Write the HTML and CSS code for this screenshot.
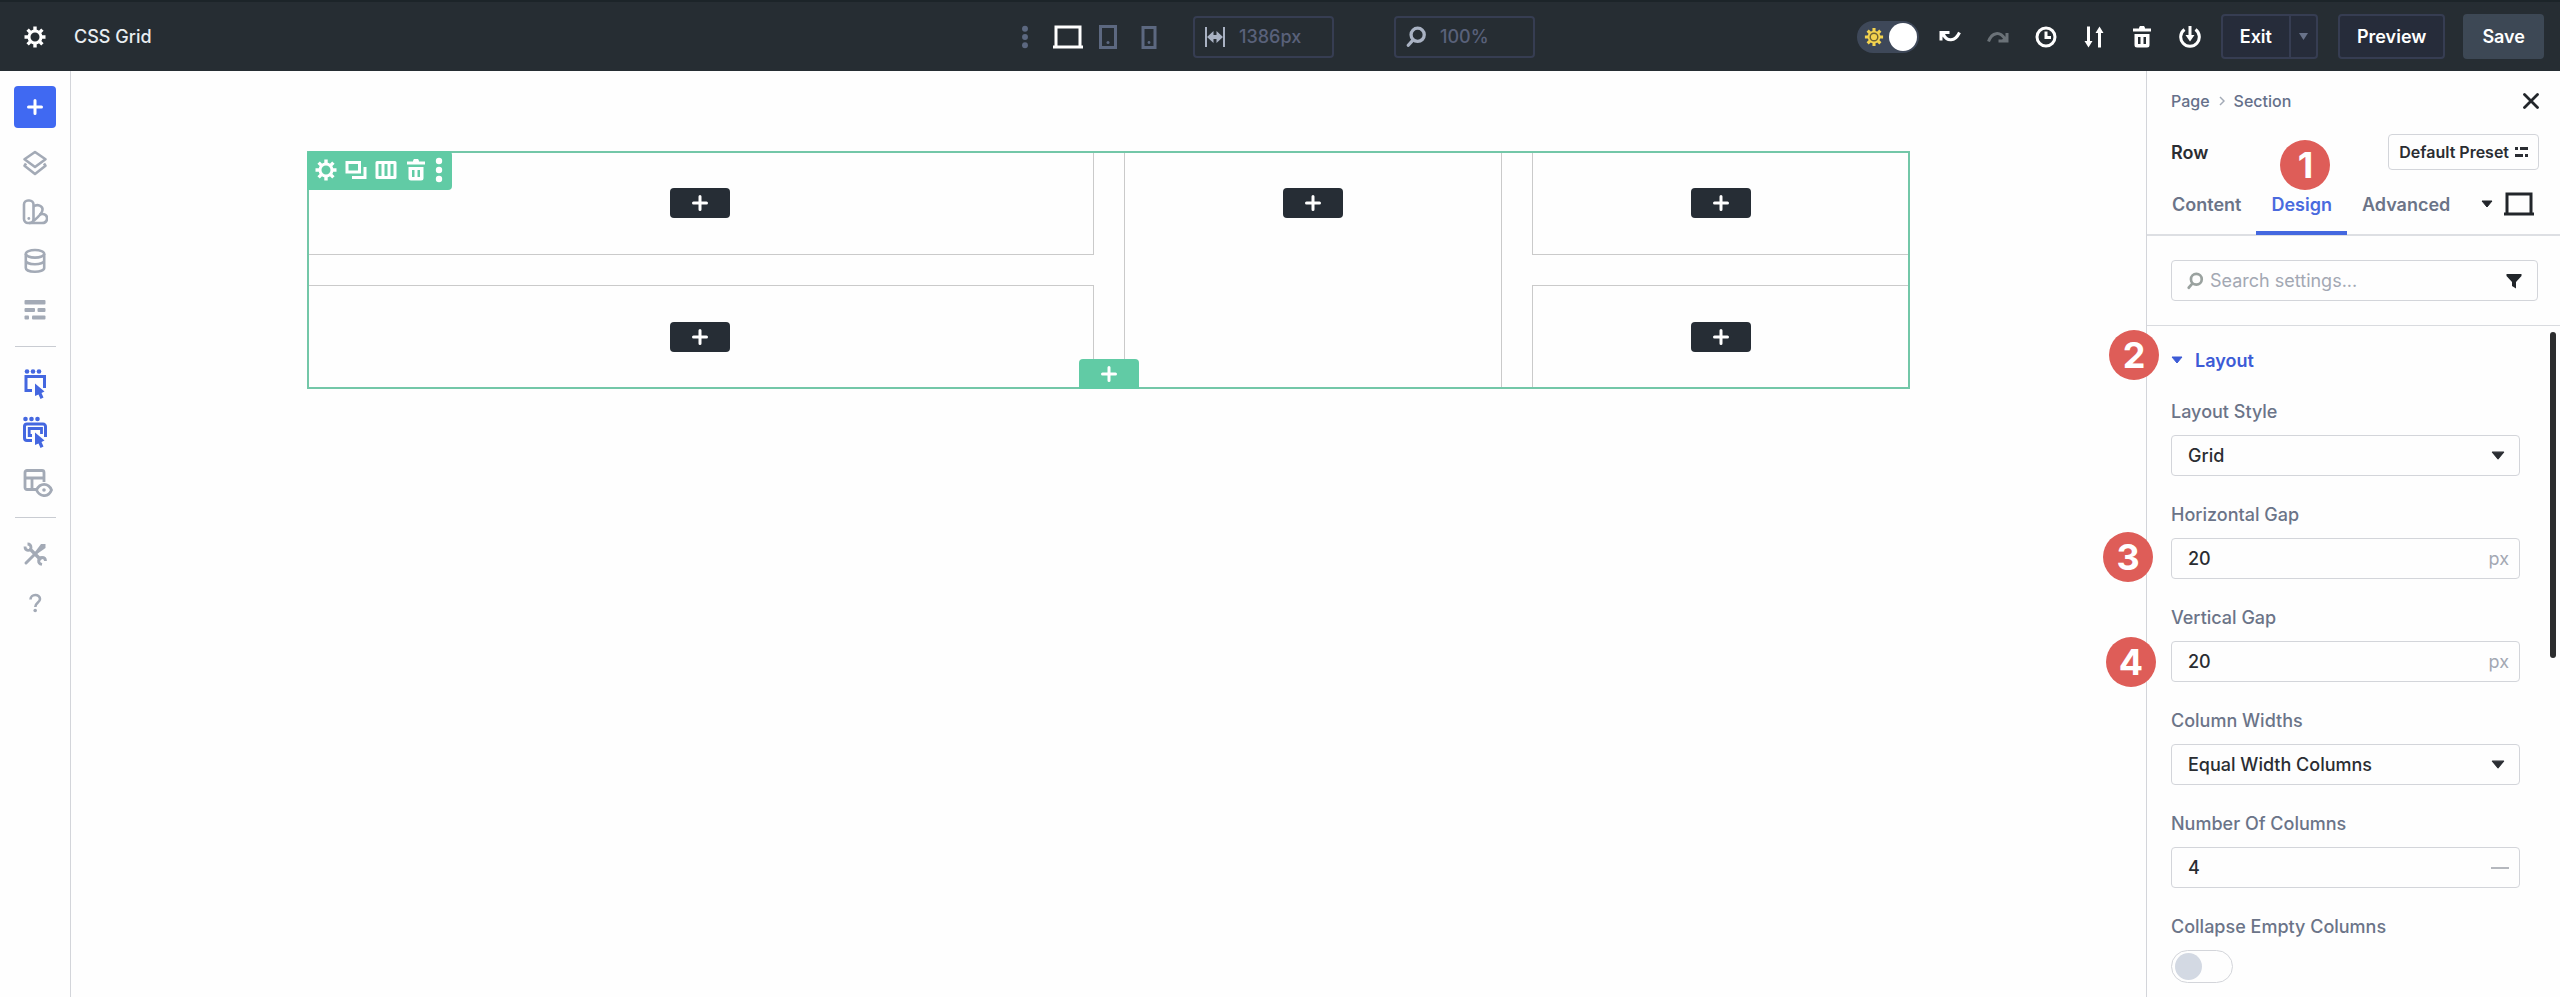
FILE: index.html
```html
<!DOCTYPE html>
<html lang="en">
<head>
  <meta charset="UTF-8" />
  <title>CSS Grid</title>
  <meta name="viewport" content="width=device-width, initial-scale=1.0" />
  <link rel="stylesheet" href="styles.css">
</head>
<body>
  <!-- shared icons -->
  <svg class="sprite" aria-hidden="true">
    <symbol id="gear" viewBox="0 0 22 22">
      <circle cx="11" cy="11" r="6" fill="none" stroke="currentColor" stroke-width="3" />
      <path d="M11 .5v4M11 17.5v4M.5 11h4M17.5 11h4M3.600 3.600l3 3M15.400 15.400l3 3M3.600 18.400l3-3M15.400 6.600l3-3" stroke="currentColor" stroke-width="3.400" />
    </symbol>
    <symbol id="plus" viewBox="0 0 16 16">
      <path d="M8 1.500v13M1.500 8h13" stroke="currentColor" stroke-width="3" stroke-linecap="round" />
    </symbol>
    <symbol id="trash" viewBox="0 0 18 22">
      <path d="M6 2.500a3 3 0 0 1 6 0h6v3H0v-3z" fill="currentColor" />
      <path d="M1.500 8h15v11a2.500 2.500 0 0 1-2.500 2.500H4A2.500 2.500 0 0 1 1.500 19zM5 11v7h2.500v-7zM10.500 11v7H13v-7z" fill="currentColor" fill-rule="evenodd" />
    </symbol>
    <symbol id="dots" viewBox="0 0 8 26">
      <circle cx="4" cy="4" r="3.200" fill="currentColor" /><circle cx="4" cy="13" r="3.200" fill="currentColor" /><circle cx="4" cy="22" r="3.200" fill="currentColor" />
    </symbol>
    <symbol id="laptop" viewBox="0 0 30 24">
      <path d="M3 21V2h24v19M0 22h30" fill="none" stroke="currentColor" stroke-width="3" />
    </symbol>
    <symbol id="search" viewBox="0 0 18 20">
      <circle cx="10.500" cy="8" r="6" fill="none" stroke="currentColor" stroke-width="3" />
      <path d="M6 13l-4 4.500" stroke="currentColor" stroke-width="3" stroke-linecap="round" />
    </symbol>
    <symbol id="caret" viewBox="0 0 12 8">
      <path d="M1 1h10L6 7z" fill="currentColor" stroke="currentColor" stroke-linejoin="round" />
    </symbol>
  </svg>

  <header class="topbar">
    <div class="topbar-left">
      <button class="icon-btn" aria-label="Settings"><svg width="22" height="22"><use href="#gear" /></svg></button>
      <span class="title">CSS Grid</span>
    </div>

    <div class="topbar-center">
      <div class="devices">
        <button class="icon-btn muted" aria-label="More"><svg width="8" height="24"><use href="#dots" /></svg></button>
        <button class="icon-btn" aria-label="Desktop"><svg width="30" height="24"><use href="#laptop" /></svg></button>
        <button class="icon-btn muted tablet" aria-label="Tablet">
          <svg width="18" height="24" viewBox="0 0 18 24"><path d="M1.500 1.500h15v21h-15z" fill="none" stroke="currentColor" stroke-width="3" /><circle cx="9" cy="17.500" r="1.500" fill="currentColor" /></svg>
        </button>
        <button class="icon-btn muted" aria-label="Phone">
          <svg width="16" height="24" viewBox="0 0 16 24"><path d="M2 2.500h12v20H2z" fill="none" stroke="currentColor" stroke-width="3" /><circle cx="8" cy="17.500" r="1.400" fill="currentColor" /></svg>
        </button>
      </div>
      <label class="size-box">
        <svg width="20" height="22" viewBox="0 0 20 22"><path d="M1 1v20M19 1v20" stroke="currentColor" stroke-width="2" /><path d="M2 11l6.500-6v4h3V5l6.500 6-6.500 6v-4h-3v4z" fill="currentColor" /></svg>
        <input type="text" value="1386px" aria-label="Viewport width">
      </label>
      <label class="size-box zoom-box">
        <svg width="20" height="22"><use href="#search" /></svg>
        <input type="text" value="100%" aria-label="Zoom">
      </label>
    </div>

    <div class="topbar-right">
      <label class="theme-switch">
        <input type="checkbox" checked aria-label="Light mode">
        <svg width="20" height="20" viewBox="0 0 22 22"><path d="M11 1v20M1 11h20M4 4l14 14M4 18L18 4" stroke="#f3d34f" stroke-width="3.400" /><circle cx="11" cy="11" r="7" fill="#f3d34f" /><circle cx="11" cy="11" r="4.200" fill="#f3d34f" stroke="#6d6234" stroke-width="1.600" /></svg>
      </label>
      <div class="actions">
        <button class="icon-btn" aria-label="Undo">
          <svg width="22" height="22" viewBox="0 0 22 22"><path d="M4 8c4 8 12 8 16.500-1.500" fill="none" stroke="currentColor" stroke-width="3" /><path d="M2 14.500V6.500h8.500" fill="none" stroke="currentColor" stroke-width="3" /><path d="M1 6h8l-8 7z" fill="currentColor" /></svg>
        </button>
        <button class="icon-btn dim" aria-label="Redo">
          <svg width="22" height="22" viewBox="0 0 22 22"><path d="M1.500 15.500C5 6 13 5 18 13" fill="none" stroke="currentColor" stroke-width="3" /><path d="M11.500 15h8.500V7" fill="none" stroke="currentColor" stroke-width="3" /><path d="M21 15.500h-8l8-7z" fill="currentColor" /></svg>
        </button>
        <button class="icon-btn" aria-label="History">
          <svg width="22" height="22" viewBox="0 0 22 22"><circle cx="11" cy="11" r="9" fill="none" stroke="currentColor" stroke-width="3" /><path d="M11 5.500V11.500h5" fill="none" stroke="currentColor" stroke-width="3" /></svg>
        </button>
        <button class="icon-btn" aria-label="Portability">
          <svg width="22" height="22" viewBox="0 0 22 22"><path d="M5.500 .5v17M16.500 4.500v17" stroke="currentColor" stroke-width="3" /><path d="M1.500 15h8l-4 6.500zM12.500 7h8l-4-6.500z" fill="currentColor" /></svg>
        </button>
        <button class="icon-btn" aria-label="Clear layout"><svg width="22" height="22"><use href="#trash" /></svg></button>
        <button class="icon-btn" aria-label="Save to library">
          <svg width="22" height="22" viewBox="0 0 22 22"><path d="M5.500 3.500a9.300 9.300 0 1 0 11 0" fill="none" stroke="currentColor" stroke-width="3" /><path d="M11 0v10" stroke="currentColor" stroke-width="3" /><path d="M6.500 9h9L11 15.500z" fill="currentColor" /></svg>
        </button>
      </div>
      <div class="split-btn">
        <button>Exit</button>
        <button class="split-caret" aria-label="Exit options"><svg width="9" height="7" viewBox="0 0 9 7"><path d="M0 0h9L4.500 7z" fill="currentColor" /></svg></button>
      </div>
      <button class="bar-btn">Preview</button>
      <button class="bar-btn save-btn">Save</button>
    </div>
  </header>

  <div class="workspace">
    <nav class="sidebar">
      <button class="add-btn" aria-label="Add"><svg width="16" height="16"><use href="#plus" /></svg></button>
      <button class="side-btn" aria-label="Layers">
        <svg width="26" height="26" viewBox="0 0 26 26"><path d="M13 2L2.500 9.200 13 17l10.500-7.800z" fill="none" stroke="currentColor" stroke-width="2.600" stroke-linejoin="round" /><path d="M4 13.500l-1.500 2.300L13 24l10.500-8.200L22 13.500" fill="none" stroke="currentColor" stroke-width="2.600" stroke-linejoin="round" /></svg>
      </button>
      <button class="side-btn" aria-label="Presets">
        <svg width="26" height="26" viewBox="0 0 26 26"><g fill="none" stroke="currentColor" stroke-width="2.600" stroke-linejoin="round"><rect x="2" y="1.500" width="9.500" height="22.500" rx="4" /><path d="M11.500 7.500c4-3 9.500-.5 9 3.500-.2 3-6 8.500-9 11" /><path d="M17.500 15.500c5-1.500 8 1 7.500 4.500-.3 3-2.500 4-5 4H7" /></g><circle cx="6.800" cy="19.500" r="1.400" fill="currentColor" /></svg>
      </button>
      <button class="side-btn" aria-label="Data">
        <svg width="26" height="26" viewBox="0 0 26 26"><g fill="none" stroke="currentColor" stroke-width="2.600"><ellipse cx="13" cy="5.800" rx="9.200" ry="3.800" /><path d="M3.800 6v14c0 5 18.400 5 18.400 0V6M3.800 12.500c0 5 18.400 5 18.400 0" /></g></svg>
      </button>
      <button class="side-btn" aria-label="Structure">
        <svg width="26" height="26" viewBox="0 0 26 26" fill="currentColor"><rect x="2.500" y="3" width="21" height="4.500" rx="1" /><rect x="2.500" y="11" width="10.500" height="4" rx="1" /><rect x="15.500" y="11" width="8" height="4" rx="1" /><rect x="2.500" y="18.500" width="4.500" height="4" rx="1" /><rect x="10" y="18.500" width="13.500" height="4" rx="1" /></svg>
      </button>
      <hr>
      <button class="side-btn active" aria-label="Select">
        <svg width="26" height="32" viewBox="0 0 26 32"><g fill="currentColor"><circle cx="5" cy="4.500" r="2.300" /><circle cx="11" cy="4.500" r="2.300" /><circle cx="17" cy="4.500" r="2.300" /><path d="M13 16.500l9.500 8-3 1.500 2 4.500-3 1.500-2-4.500-3.500 1.500z" /></g><path d="M10 23.500H4V9.500h18.500V21" fill="none" stroke="currentColor" stroke-width="3" /></svg>
      </button>
      <button class="side-btn active" aria-label="Select nested">
        <svg width="26" height="32" viewBox="0 0 26 32"><g fill="currentColor"><circle cx="3.500" cy="3" r="2.300" /><circle cx="9.500" cy="3" r="2.300" /><circle cx="15.500" cy="3" r="2.300" /><path d="M13 16.500l9.500 8-3 1.500 2 4.500-3 1.500-2-4.500-3.500 1.500z" /></g><g fill="none" stroke="currentColor"><path d="M10 24.500H5A2.500 2.500 0 0 1 2.500 22V10A2.500 2.500 0 0 1 5 8h16a2.500 2.500 0 0 1 2.500 2.500V21" stroke-width="3" /><path d="M10 19.500H7.200v-7h12.300V18" stroke-width="2.800" /></g></svg>
      </button>
      <button class="side-btn" aria-label="Layout view">
        <svg class="wide" width="32" height="32" viewBox="0 0 32 32"><g fill="none" stroke="currentColor" stroke-width="2.800"><path d="M15 24.500H6A2 2 0 0 1 4 22.500V7.500A2 2 0 0 1 6 5.500h15a2 2 0 0 1 2 2V17M4 13h19M11 13v11" /><path d="M15.500 25c3.500-7.500 12-7.500 15 0-3 7.500-11.500 7.500-15 0z" /></g><circle cx="23" cy="25" r="1.800" fill="currentColor" /></svg>
      </button>
      <hr>
      <button class="side-btn" aria-label="Tools">
        <svg width="26" height="26" viewBox="0 0 26 26"><path d="M4 22L14 12" stroke="currentColor" stroke-width="3" stroke-linecap="round" /><path d="M13 11l6-8h4.500v4l-8.500 6z" fill="currentColor" /><path d="M7.500 7.500L19 19" stroke="currentColor" stroke-width="3.400" /><path d="M3 5.500c0 5 6 5 6 1 0-2-1-3.500-3.500-3.500M20 23.500c-5-1-4-7 0-7 2.500 0 3.500 1.500 3.500 3.500" fill="none" stroke="currentColor" stroke-width="2.800" /></svg>
      </button>
      <button class="side-btn" aria-label="Help">
        <svg width="26" height="26" viewBox="0 0 26 26"><path d="M8.500 9.500c0-6 9.500-6 9.500-.5 0 3.500-4.700 3.500-4.700 8" fill="none" stroke="currentColor" stroke-width="2.600" /><circle cx="13.200" cy="20.500" r="1.800" fill="currentColor" /></svg>
      </button>
    </nav>

    <main class="canvas">
      <section class="row">
        <div class="cell cell-wide"><button class="module-btn" aria-label="Add module"><svg width="16" height="16"><use href="#plus" /></svg></button></div>
        <div class="cell cell-tall"><button class="module-btn" aria-label="Add module"><svg width="16" height="16"><use href="#plus" /></svg></button></div>
        <div class="cell"><button class="module-btn" aria-label="Add module"><svg width="16" height="16"><use href="#plus" /></svg></button></div>
        <div class="cell cell-wide"><button class="module-btn" aria-label="Add module"><svg width="16" height="16"><use href="#plus" /></svg></button></div>
        <div class="cell"><button class="module-btn" aria-label="Add module"><svg width="16" height="16"><use href="#plus" /></svg></button></div>

        <div class="row-tools">
          <button class="icon-btn" aria-label="Row settings"><svg width="22" height="22"><use href="#gear" /></svg></button>
          <button class="icon-btn" aria-label="Duplicate row">
            <svg width="22" height="22" viewBox="0 0 22 22"><path d="M2 3.500h12.500v9.500H2zM20 8v10.500H7" fill="none" stroke="currentColor" stroke-width="3" /></svg>
          </button>
          <button class="icon-btn" aria-label="Columns">
            <svg width="22" height="22" viewBox="0 0 22 22"><path d="M2 3.500h18v15H2zM8 3.500v15M14 3.500v15" fill="none" stroke="currentColor" stroke-width="3" stroke-linejoin="round" /></svg>
          </button>
          <button class="icon-btn" aria-label="Delete row"><svg width="22" height="22"><use href="#trash" /></svg></button>
          <button class="icon-btn" aria-label="More"><svg width="8" height="26"><use href="#dots" /></svg></button>
        </div>
        <button class="row-add" aria-label="Add row"><svg width="16" height="16"><use href="#plus" /></svg></button>
      </section>
    </main>

    <aside class="panel">
      <div class="panel-head">
        <div class="crumbs">
          <a href="#">Page</a>
          <svg width="6" height="10" viewBox="0 0 6 10"><path d="M1 1l4 4-4 4" fill="none" stroke="currentColor" stroke-width="1.500" /></svg>
          <a href="#">Section</a>
          <button class="icon-btn close" aria-label="Close"><svg width="16" height="16" viewBox="0 0 16 16"><path d="M1.500 1.500l13 13M14.500 1.500l-13 13" stroke="currentColor" stroke-width="2.800" stroke-linecap="round" /></svg></button>
        </div>
        <div class="panel-title">
          <h2>Row</h2>
          <button class="preset">Default Preset <svg width="13" height="12" viewBox="0 0 13 12" fill="currentColor"><path d="M0 1h3v3H0zM5 1h8v3H5zM0 8h8v3H0zM10 8h3v3h-3z" /></svg></button>
        </div>
        <div class="tabs">
          <button class="tab">Content</button>
          <button class="tab current">Design<span class="badge badge-top">1</span></button>
          <button class="tab">Advanced</button>
          <button class="device-pick" aria-label="Device">
            <svg width="12" height="8"><use href="#caret" /></svg>
            <svg width="30" height="24"><use href="#laptop" /></svg>
          </button>
        </div>
      </div>

      <div class="search">
        <label class="search-box">
          <svg width="18" height="18"><use href="#search" /></svg>
          <input type="text" placeholder="Search settings..." aria-label="Search settings">
          <svg class="filter" width="16" height="16" viewBox="0 0 16 16"><path d="M.5 1h15v2L10 9v6.500L6 13V9L.5 3z" fill="currentColor" /></svg>
        </label>
      </div>

      <div class="settings">
        <button class="group-title"><svg width="12" height="8"><use href="#caret" /></svg>Layout<span class="badge badge-group">2</span></button>

        <div class="field">
          <label for="layout-style">Layout Style</label>
          <div class="control">
            <select id="layout-style"><option>Grid</option></select>
            <svg class="arrow" width="14" height="9"><use href="#caret" /></svg>
          </div>
        </div>
        <div class="field">
          <label for="h-gap">Horizontal Gap</label>
          <div class="control">
            <input type="text" id="h-gap" value="20">
            <span class="unit">px</span>
            <span class="badge badge-h">3</span>
          </div>
        </div>
        <div class="field">
          <label for="v-gap">Vertical Gap</label>
          <div class="control">
            <input type="text" id="v-gap" value="20">
            <span class="unit">px</span>
            <span class="badge badge-v">4</span>
          </div>
        </div>
        <div class="field">
          <label for="col-widths">Column Widths</label>
          <div class="control">
            <select id="col-widths"><option>Equal Width Columns</option></select>
            <svg class="arrow" width="14" height="9"><use href="#caret" /></svg>
          </div>
        </div>
        <div class="field">
          <label for="col-count">Number Of Columns</label>
          <div class="control">
            <input type="text" id="col-count" value="4">
            <span class="unit dash"></span>
          </div>
        </div>
        <div class="field">
          <label for="collapse">Collapse Empty Columns</label>
          <input type="checkbox" class="switch" id="collapse">
        </div>
        <div class="scroll-thumb"></div>
      </div>
    </aside>
  </div>
</body>
</html>
```
FILE: styles.css
```css
* {
  box-sizing: border-box;
}

body {
  margin: 0;
  height: 100vh;
  display: flex;
  flex-direction: column;
  overflow: hidden;
  font-family: Inter, "Liberation Sans", sans-serif;
  font-size: 18px;
  font-weight: 500;
  color: #2a2d32;
  background-color: #fefefe;
}

button,
input,
select {
  font: inherit;
  color: inherit;
  margin: 0;
  padding: 0;
  border: none;
  background: none;
}

button {
  cursor: pointer;
}

svg {
  display: block;
  flex: none;
}

.sprite {
  position: absolute;
  width: 0;
  height: 0;
}

.icon-btn {
  display: flex;
  align-items: center;
  justify-content: center;
}

/* top bar */
.topbar {
  display: grid;
  grid-template-columns: 1fr auto 1fr;
  align-items: center;
  height: 71px;
  padding: 0 16px 0 12px;
  border-top: 2px solid #1c2429;
  background-color: #262d33;
  color: #fff;
}

.topbar-left {
  display: flex;
  align-items: center;
  gap: 28px;
  padding-left: 12px;
}

.title {
  color: #e9edf1;
}

.topbar-center {
  display: flex;
  align-items: center;
}

.devices {
  display: flex;
  align-items: center;
  gap: 24px;
  margin-right: 36px;
}

.tablet {
  margin-left: -8px;
}

.muted {
  color: #5c6880;
}

.dim {
  color: #6b7278;
}

.size-box {
  display: flex;
  align-items: center;
  gap: 14px;
  width: 141px;
  height: 42px;
  padding: 0 10px;
  border: 2px solid #363d52;
  border-radius: 4px;
  color: #a9b2c3;
}

.size-box input {
  width: 100%;
  min-width: 0;
  color: #59617a;
}

.zoom-box {
  margin-left: 60px;
}

.topbar-right {
  display: flex;
  align-items: center;
  justify-content: flex-end;
  gap: 20px;
}

.theme-switch {
  position: relative;
  display: flex;
  align-items: center;
}

.theme-switch input {
  appearance: none;
  display: flex;
  align-items: center;
  justify-content: flex-end;
  width: 62px;
  height: 32px;
  padding: 0 2px;
  border-radius: 16px;
  background-color: #3e4859;
}

.theme-switch input::before {
  content: "";
  width: 28px;
  height: 28px;
  border-radius: 50%;
  background-color: #fff;
}

.theme-switch svg {
  position: absolute;
  left: 7px;
}

.actions {
  display: flex;
  gap: 26px;
}

.split-btn {
  display: flex;
  height: 45px;
  border: 2px solid #363d52;
  border-radius: 4px;
  background-color: #262c3a;
  font-weight: 600;
}

.split-btn button {
  padding: 0 17px;
}

.split-btn .split-caret {
  padding: 0 8px;
  border-left: 2px solid #363d52;
  color: #69738a;
}

.bar-btn {
  height: 45px;
  padding: 0 17px;
  border: 2px solid #363d52;
  border-radius: 4px;
  background-color: #262c3a;
  font-weight: 600;
}

.save-btn {
  margin-left: -2px;
  border-color: #3d4855;
  background-color: #3d4855;
}

/* layout */
.workspace {
  flex: 1;
  display: flex;
  min-height: 0;
}

.sidebar {
  width: 71px;
  padding-top: 15px;
  border-right: 1px solid #d3d5da;
  display: flex;
  flex-direction: column;
  align-items: center;
}

.add-btn {
  display: flex;
  align-items: center;
  justify-content: center;
  width: 42px;
  height: 42px;
  margin-bottom: 10px;
  border-radius: 4px;
  background-color: #4069f2;
  color: #fff;
}

.side-btn {
  display: flex;
  align-items: center;
  justify-content: center;
  width: 42px;
  height: 49px;
  color: #a3aab6;
}

.side-btn .wide {
  margin-left: 4px;
}

.side-btn.active {
  color: #4467e0;
}

.sidebar hr {
  width: 41px;
  height: 1px;
  margin: 12px 0 11px;
  border: none;
  background-color: #c9ccd2;
}

.canvas {
  flex: 1;
  padding: 80px 236px;
}

.row {
  position: relative;
  display: grid;
  grid-template-columns: repeat(4, 1fr);
  grid-auto-rows: 104px;
  gap: 30px;
  outline: 2px solid #73c7a8;
  outline-offset: -2px;
}

.cell {
  border: 1px solid #cacaca;
  padding-top: 36px;
  display: flex;
  justify-content: center;
  align-items: flex-start;
}

.cell-wide {
  grid-column: span 2;
}

.cell-tall {
  grid-row: span 2;
}

.module-btn,
.row-add {
  display: flex;
  align-items: center;
  justify-content: center;
  width: 60px;
  height: 30px;
  border-radius: 4px;
  background-color: #262d35;
  color: #fff;
}

.row-add {
  position: absolute;
  left: 50%;
  bottom: 0;
  margin-left: -30px;
  border-radius: 4px 4px 0 0;
  background-color: #61cba5;
}

.row-tools {
  position: absolute;
  top: 0;
  left: 0;
  display: flex;
  align-items: center;
  gap: 8px;
  height: 39px;
  padding: 0 9px 2px 8px;
  border-radius: 4px 4px 4px 0;
  background-color: #61cba5;
  color: #fff;
}

/* settings panel */
.panel {
  width: 414px;
  border-left: 1px solid #d3d5da;
}

.panel-head {
  padding: 17px 21px 0 24px;
  border-bottom: 2px solid #dddfe3;
}

.crumbs {
  display: flex;
  align-items: center;
  gap: 9px;
  height: 26px;
  font-size: 16px;
  color: #a3aab6;
}

.crumbs a {
  color: #65708a;
  text-decoration: none;
}

.close {
  margin-left: auto;
  color: #22262b;
}

.panel-title {
  display: flex;
  align-items: center;
  justify-content: space-between;
  margin-top: 20px;
}

.panel-title h2 {
  margin: 0;
  font-size: 18px;
  font-weight: 600;
}

.preset {
  display: flex;
  align-items: center;
  gap: 6px;
  height: 36px;
  padding: 0 10px;
  border: 1px solid #d3d5da;
  border-radius: 4px;
  font-size: 16px;
  font-weight: 600;
}

.tabs {
  display: flex;
  height: 65px;
  margin: 0 0 -1px -14px;
}

.tab {
  position: relative;
  padding: 8px 15px 0;
  border-bottom: 4px solid transparent;
  color: #6b7488;
  font-weight: 600;
}

.tab.current {
  color: #4a6ade;
  border-color: #4468e0;
}

.device-pick {
  display: flex;
  align-items: center;
  gap: 11px;
  margin: 0 5px 0 auto;
  padding-top: 2px;
  color: #22262b;
}

.search {
  padding: 24px 22px 24px 24px;
  border-bottom: 1px solid #d9dbdf;
}

.search-box {
  display: flex;
  align-items: center;
  gap: 6px;
  height: 41px;
  padding: 0 15px 0 14px;
  border: 1px solid #d3d5da;
  border-radius: 4px;
  color: #9aa29f;
}

.search-box input {
  flex: 1;
  min-width: 0;
  font-weight: 400;
}

.search-box input::placeholder {
  color: #a3a8b3;
}

.filter {
  color: #22262b;
}

.settings {
  position: relative;
  padding: 22px 40px 0 24px;
}

.group-title {
  position: relative;
  display: flex;
  align-items: center;
  gap: 12px;
  height: 24px;
  margin-bottom: 28px;
  color: #3c5bd6;
  font-weight: 600;
}

.field {
  margin-bottom: 27px;
}

.field label {
  display: block;
  margin-bottom: 11px;
  line-height: 24px;
  color: #6b7488;
}

.control {
  position: relative;
}

.control input,
.control select {
  display: block;
  appearance: none;
  width: 100%;
  height: 41px;
  padding: 0 16px;
  border: 1px solid #d3d5da;
  border-radius: 4px;
}

.arrow {
  position: absolute;
  top: 16px;
  right: 15px;
  pointer-events: none;
}

.unit {
  position: absolute;
  top: 0;
  right: 11px;
  line-height: 41px;
  font-weight: 400;
  color: #a3a8b3;
}

.dash {
  top: 20px;
  width: 18px;
  height: 2px;
  background-color: #b5b8be;
}

.switch {
  appearance: none;
  display: flex;
  align-items: center;
  width: 62px;
  height: 33px;
  padding: 0 3px;
  border: 1px solid #d3d5da;
  border-radius: 17px;
}

.switch::before {
  content: "";
  width: 27px;
  height: 27px;
  border-radius: 50%;
  background-color: #d3d9e3;
}

.scroll-thumb {
  position: absolute;
  top: 6px;
  right: 4px;
  width: 6px;
  height: 326px;
  border-radius: 3px;
  background-color: #2c2d2f;
}

/* numbered markers */
.badge {
  position: absolute;
  width: 50px;
  height: 50px;
  border-radius: 50%;
  background-color: #de5d58;
  color: #fff;
  font-size: 36px;
  font-weight: 700;
  line-height: 50px;
  text-align: center;
}

.badge-top {
  top: -30px;
  left: 24px;
}

.badge-group {
  top: -18px;
  left: -62px;
}

.badge-h {
  top: -6px;
  left: -68px;
}

.badge-v {
  top: -4px;
  left: -65px;
}
```
